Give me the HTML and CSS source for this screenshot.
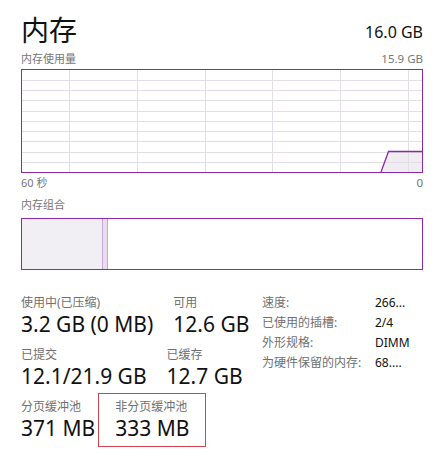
FILE: index.html
```html
<!DOCTYPE html>
<html lang="zh-CN">
<head>
<meta charset="utf-8">
<title>内存</title>
<link rel="stylesheet" href="styles.css">
</head>
<body>
<div class="panel">
  <div class="header">
    <div class="title">内存</div>
    <div class="total">16.0 GB</div>
  </div>
  <div class="caption-row">
    <span>内存使用量</span>
    <span class="num">15.9 GB</span>
  </div>
  <div class="graph">
    <svg class="graph-svg" width="400" height="102" viewBox="0 0 400 102">
      <polygon points="359,102 366.5,81.5 400,81.5 400,102" fill="#efedf1"/>
      <g stroke="#e3dde6" stroke-width="1">
        <line x1="0" y1="10.5" x2="400" y2="10.5"/>
        <line x1="0" y1="20.5" x2="400" y2="20.5"/>
        <line x1="0" y1="30.5" x2="400" y2="30.5"/>
        <line x1="0" y1="41.5" x2="400" y2="41.5"/>
        <line x1="0" y1="51.5" x2="400" y2="51.5"/>
        <line x1="0" y1="61.5" x2="400" y2="61.5"/>
        <line x1="0" y1="71.5" x2="400" y2="71.5"/>
        <line x1="0" y1="82.5" x2="400" y2="82.5"/>
        <line x1="0" y1="92.5" x2="400" y2="92.5"/>
        <line x1="47.5" y1="0" x2="47.5" y2="102"/>
        <line x1="115.5" y1="0" x2="115.5" y2="102"/>
        <line x1="183.5" y1="0" x2="183.5" y2="102"/>
        <line x1="250.5" y1="0" x2="250.5" y2="102"/>
        <line x1="318.5" y1="0" x2="318.5" y2="102"/>
        <line x1="386.5" y1="0" x2="386.5" y2="102"/>
      </g>
      <polyline points="359,102 366.5,81.5 400,81.5" fill="none" stroke="#8b2aa6" stroke-width="1.3"/>
    </svg>
  </div>
  <div class="caption-row axis">
    <span>60 秒</span>
    <span class="num">0</span>
  </div>
  <div class="caption-row comp-label">
    <span>内存组合</span>
  </div>
  <div class="composition">
    <div class="seg-inuse"></div>
    <div class="seg-modified"></div>
    <div class="seg-rest"></div>
  </div>
  <div class="stats">
    <div class="stats-left">
      <div class="stat-row">
        <div class="stat">
          <div class="stat-label">使用中(已压缩)</div>
          <div class="stat-value">3.2 GB (0 MB)</div>
        </div>
        <div class="stat">
          <div class="stat-label">可用</div>
          <div class="stat-value">12.6 GB</div>
        </div>
      </div>
      <div class="stat-row">
        <div class="stat">
          <div class="stat-label">已提交</div>
          <div class="stat-value">12.1/21.9 GB</div>
        </div>
        <div class="stat">
          <div class="stat-label">已缓存</div>
          <div class="stat-value">12.7 GB</div>
        </div>
      </div>
      <div class="stat-row">
        <div class="stat">
          <div class="stat-label">分页缓冲池</div>
          <div class="stat-value">371 MB</div>
        </div>
        <div class="stat highlighted">
          <div class="stat-label">非分页缓冲池</div>
          <div class="stat-value">333 MB</div>
        </div>
      </div>
    </div>
    <div class="stats-right">
      <div class="info-label">速度:</div><div class="info-value">266...</div>
      <div class="info-label">已使用的插槽:</div><div class="info-value">2/4</div>
      <div class="info-label">外形规格:</div><div class="info-value">DIMM</div>
      <div class="info-label">为硬件保留的内存:</div><div class="info-value">68....</div>
    </div>
  </div>
</div>
</body>
</html>
```

FILE: styles.css
```css
html, body {
  margin: 0;
  padding: 0;
  background: #ffffff;
}

body {
  min-height: 100vh;
  font-family: "Noto Sans", "Noto Sans CJK SC", sans-serif;
  color: #000000;
}

.panel {
  width: 402px;
  padding: 11px 0 0 21px;
}

.header {
  display: flex;
  justify-content: space-between;
  align-items: flex-start;
  height: 36px;
}

.title {
  font-family: "Noto Sans CJK SC", sans-serif;
  font-size: 28px;
  line-height: 36px;
  color: #111111;
}

.total {
  margin-top: 11px;
  font-size: 16px;
  line-height: 20px;
  color: #111111;
}

.caption-row {
  display: flex;
  justify-content: space-between;
  margin-top: 4px;
  font-size: 11px;
  line-height: 16px;
  color: #767676;
}

.caption-row .num {
  font-size: 11.5px;
}

.graph {
  margin-top: 2px;
  width: 400px;
  height: 102px;
  border: 1px solid #8b2aa6;
}

.graph-svg {
  display: block;
}

.axis {
  margin-top: 2px;
}

.comp-label {
  margin-top: 6px;
}

.composition {
  display: flex;
  margin-top: 5px;
  width: 400px;
  height: 50px;
  border: 1px solid #8b2aa6;
}

.seg-inuse {
  width: 80px;
  background: #f1eff3;
}

.seg-modified {
  width: 4px;
  background: #eadcef;
  border-left: 1px solid #cba6d8;
  border-right: 1px solid #cba6d8;
}

.seg-rest {
  flex: 1;
  background: #ffffff;
}

.stats {
  display: flex;
  margin-top: 23px;
}

.stats-left {
  width: 241px;
  padding-top: 2px;
  display: flex;
  flex-direction: column;
  gap: 10px;
}

.stat-row {
  display: flex;
  gap: 20px;
}

.stat {
  position: relative;
}

.stat-label {
  font-size: 12px;
  line-height: 16px;
  color: #707070;
  white-space: nowrap;
}

.stat-value {
  font-size: 21px;
  line-height: 26px;
  color: #111111;
  white-space: nowrap;
}

.highlighted::after {
  content: "";
  position: absolute;
  left: -17px;
  top: -6px;
  width: 106px;
  height: 52px;
  border: 1px solid #d4434f;
}

.stats-right {
  display: grid;
  grid-template-columns: 113px auto;
  align-content: start;
  font-size: 12px;
  line-height: 20px;
}

.info-label {
  color: #707070;
  white-space: nowrap;
}

.info-value {
  color: #111111;
  white-space: nowrap;
}
```
